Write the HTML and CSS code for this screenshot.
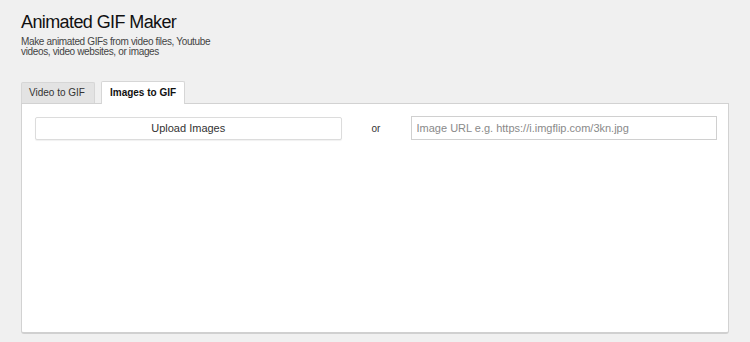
FILE: index.html
```html
<!DOCTYPE html>
<html>
  <head>
    <title>Animated GIF Maker</title>
    <link rel="stylesheet" href="styles.css">
  </head>
  <body>
    <div class="page">
      <h1 class="title">Animated GIF Maker</h1>
      <p class="subtitle">Make animated GIFs from video files, Youtube videos, video websites, or images</p>

      <div class="tabs">
        <div class="tab">Video to GIF</div>
        <div class="tab tab-active">Images to GIF</div>
      </div>

      <div class="panel">
        <div class="source-row">
          <button class="upload-btn" type="button">Upload Images</button>
          <span class="or">or</span>
          <input class="url-input" type="text" placeholder="Image URL e.g. https://i.imgflip.com/3kn.jpg">
        </div>
      </div>
    </div>
  </body>
</html>
```

FILE: styles.css
```css
html, body {
  height: 100%;
}
body {
  margin: 0;
  background-color: #f0f0f0;
  font-family: "Liberation Sans", Arial, sans-serif;
  color: #222;
}

.page {
  padding: 11px 21px 8px 21px;
  box-sizing: border-box;
  height: 100%;
  display: flex;
  flex-direction: column;
}

.title {
  margin: 0;
  font-size: 18px;
  font-weight: normal;
  line-height: 22px;
  letter-spacing: -0.6px;
  color: #111;
}

.subtitle {
  margin: 4px 0 0 0;
  max-width: 215px;
  font-size: 10px;
  line-height: 10px;
  letter-spacing: -0.35px;
  color: #444;
}

.tabs {
  display: flex;
  gap: 6px;
  margin-top: 24px;
  align-items: flex-end;
}

.tab {
  height: 20px;
  line-height: 20px;
  padding: 0 9px 0 7px;
  font-size: 10px;
  color: #333;
  background-color: #e3e3e3;
  border: 1px solid #d6d6d6;
  border-bottom: none;
  border-radius: 2px 2px 0 0;
}

.tab-active {
  height: 22px;
  line-height: 22px;
  padding: 0 8px 0 8px;
  margin-bottom: -1px;
  font-weight: bold;
  color: #111;
  background-color: #fff;
  position: relative;
}

.panel {
  flex: 1;
  background-color: #fff;
  border: 1px solid #d2d2d2;
  border-bottom: 2px solid #d0d0d0;
  border-radius: 0 0 3px 3px;
  padding: 12px 11px 0 13px;
}

.source-row {
  display: grid;
  grid-template-columns: minmax(0, 1fr) 69px minmax(0, 1fr);
  align-items: center;
}

.upload-btn {
  height: 23px;
  margin: 0;
  padding: 0;
  background-color: #fff;
  border: 1px solid #dcdcdc;
  border-radius: 2px;
  box-shadow: 0 1px 1px rgba(0, 0, 0, 0.06);
  font-family: inherit;
  font-size: 11px;
  color: #333;
}

.or {
  text-align: center;
  font-size: 10px;
  color: #333;
}

.url-input {
  width: 100%;
  height: 24px;
  margin: 0;
  padding: 0 5px;
  box-sizing: border-box;
  border: 1px solid #d0d0d0;
  font-family: inherit;
  font-size: 11px;
}

.url-input::placeholder {
  color: #8a8a8a;
}
```
